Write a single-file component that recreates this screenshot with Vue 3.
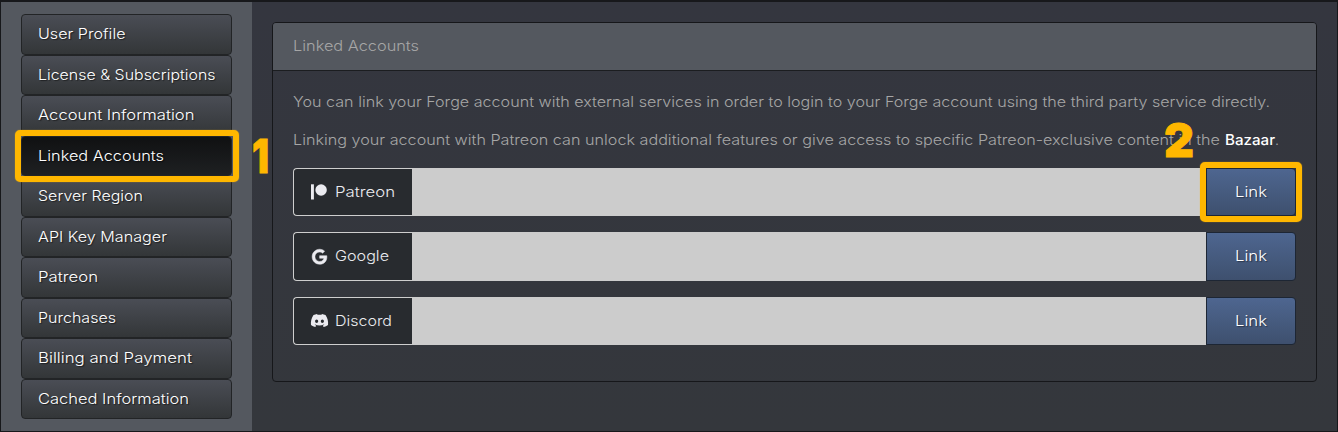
<script setup>
import { h } from 'vue'

// Single line of text set to an exact measure
const Line = (props) =>
  h('svg', { class: 'line', width: props.w, height: 20 }, [
    h('text', { x: 0, y: 15, textLength: props.w, lengthAdjust: 'spacingAndGlyphs' }, props.t),
  ])
Line.props = ['t', 'w']

const menu = [
  { t: 'User Profile', w: 87.5 },
  { t: 'License & Subscriptions', w: 177.5 },
  { t: 'Account Information', w: 156.5 },
  { t: 'Linked Accounts', w: 126, active: true },
  { t: 'Server Region', w: 105 },
  { t: 'API Key Manager', w: 129 },
  { t: 'Patreon', w: 60 },
  { t: 'Purchases', w: 78 },
  { t: 'Billing and Payment', w: 154 },
  { t: 'Cached Information', w: 151 },
]
const services = [
  { t: 'Patreon', w: 60, linked: true },
  { t: 'Google', w: 54 },
  { t: 'Discord', w: 57 },
]
</script>

<template>
  <div class="page">
    <nav class="sidebar">
      <a v-for="m in menu" :key="m.t" class="item" :class="{ active: m.active }">
        <Line :t="m.t" :w="m.w" />
        <i v-if="m.active" class="ring"></i>
      </a>
    </nav>
    <main class="main">
      <section class="card">
        <header class="head"><Line t="Linked Accounts" :w="126" /></header>
        <div class="body">
          <p><Line t="You can link your Forge account with external services in order to login to your Forge account using the third party service directly." :w="977" /></p>
          <p class="second">
            <Line t="Linking your account with Patreon can unlock additional features or give access to specific Patreon-exclusive content in the" :w="927" />
            <a class="bazaar"><Line t="Bazaar" :w="50" /></a><Line t="." :w="4" />
          </p>
          <div v-for="s in services" :key="s.t" class="row">
            <div class="label">
              <span class="icon">
                <svg v-if="s.t === 'Patreon'" width="16" height="16" viewBox="0 0 16 16"><path d="M0 .3h2.9v15.2H0z" /><circle cx="10.1" cy="6" r="5.7" /></svg>
                <svg v-else-if="s.t === 'Google'" class="bold" width="15" height="15.5" viewBox="0 0 488 512"><path d="M488 261.8C488 403.3 391.1 504 248 504 110.8 504 0 393.2 0 256S110.8 8 248 8c66.8 0 123 24.5 166.3 64.9l-67.5 64.9C258.5 52.6 94.3 116.6 94.3 256c0 86.5 69.1 156.6 153.7 156.6 98.2 0 135-70.4 140.8-106.9H248v-85.3h236.1c2.3 12.7 3.9 24.9 3.9 41.4z" /></svg>
                <svg v-else width="19" height="15" viewBox="0 0 640 512"><path d="M524.5 69.8a1.5 1.5 0 0 0-.8-.7A485 485 0 0 0 404.100 32a1.800 1.800 0 0 0-1.900.9 337.500 337.500 0 0 0-14.900 30.600 447.800 447.800 0 0 0-134.400 0 309.500 309.500 0 0 0-15.100-30.600 1.900 1.900 0 0 0-1.900-.9A483.700 483.700 0 0 0 116.100 69.100a1.700 1.700 0 0 0-.8.7C39.100 183.700 18.200 294.700 28.400 404.400a2 2 0 0 0 .8 1.400A487.700 487.700 0 0 0 176 479.900a1.900 1.900 0 0 0 2.100-.7A348.200 348.200 0 0 0 208.100 430.400a1.900 1.900 0 0 0-1-2.600 321.200 321.200 0 0 1-45.900-21.900 1.900 1.900 0 0 1-.2-3.100c3.100-2.300 6.200-4.700 9.100-7.100a1.800 1.800 0 0 1 1.900-.3c96.200 43.900 200.400 43.900 295.500 0a1.800 1.800 0 0 1 1.900.2c2.900 2.400 6 4.900 9.100 7.200a1.900 1.900 0 0 1-.2 3.100 301.400 301.400 0 0 1-45.900 21.800 1.900 1.900 0 0 0-1 2.600 391.100 391.100 0 0 0 30 48.800 1.900 1.900 0 0 0 2.100.7A486 486 0 0 0 610.700 405.700a1.900 1.900 0 0 0 .8-1.400C623.700 277.600 590.900 167.500 524.500 69.800zM222.500 337.600c-29 0-52.800-26.600-52.800-59.200s23.400-59.300 52.800-59.300c29.700 0 53.300 26.800 52.800 59.200 0 32.700-23.400 59.300-52.800 59.300zm195.400 0c-29 0-52.800-26.600-52.800-59.200s23.300-59.300 52.800-59.300c29.700 0 53.300 26.800 52.800 59.200 0 32.700-23.200 59.300-52.800 59.300z" /></svg>
              </span>
              <Line :t="s.t" :w="s.w" />
            </div>
            <div class="field"></div>
            <button class="btn"><Line t="Link" :w="32" /><i v-if="s.linked" class="ring"></i></button>
          </div>
        </div>
      </section>
    </main>
    <svg class="num one" width="30" height="70"><text x="0" y="50" textLength="17" lengthAdjust="spacingAndGlyphs">1</text></svg>
    <svg class="num two" width="40" height="70"><text x="0" y="50" textLength="30" lengthAdjust="spacingAndGlyphs">2</text></svg>
  </div>
</template>

<style scoped>
.page {
  position: relative;
  box-sizing: border-box;
  width: 1338px;
  height: 432px;
  display: flex;
  overflow: hidden;
  border: 1px solid #17181b;
  border-top-width: 2px;
  background: linear-gradient(#34363f, #34373c);
  font-family: Inter, "Liberation Sans", sans-serif;
  font-size: 14.5px;
  font-weight: 360;
}
.page :deep(.line) { display: block; flex: none; overflow: visible; fill: currentColor; }
.sidebar {
  box-sizing: border-box;
  width: 251px;
  flex: none;
  padding: 12px 20px;
  background: #54585f;
}
.item {
  position: relative;
  box-sizing: border-box;
  display: flex;
  align-items: center;
  height: 40.5px;
  padding: 0 0 0 16px;
  border: 1px solid #222426;
  border-radius: 4px;
  background: linear-gradient(#4a4d55, #333638);
  color: #fff;
  text-shadow: 1px 1px 1px rgba(0, 0, 0, .5);
}
.item.active { background: linear-gradient(#101112, #1e2022); }
.ring {
  position: absolute;
  border: 6px solid #ffb700;
  border-radius: 5px;
  box-shadow: 0 0 1px #ffb700;
  z-index: 2;
}
.item .ring { inset: -7px -8px -7px -7px; }
.main { flex: 1; padding: 20px 20px 0; }
.card {
  box-sizing: border-box;
  height: 360px;
  border: 1px solid #16171a;
  border-radius: 4px;
  color: #a6a6a6;
}
.head {
  box-sizing: border-box;
  height: 48px;
  padding: 13px 20px 0;
  border-bottom: 1px solid #1b1d20;
  border-radius: 3px 3px 0 0;
  background: #54585f;
}
.body { padding: 21px 20px 0; }
p { display: flex; margin: 0 0 18px; }
p.second { margin-bottom: 17.6px; }
.bazaar { margin-left: 5px; color: #fff; font-weight: 450; }
.row { display: flex; height: 48.5px; margin-bottom: 16px; }
.label {
  box-sizing: border-box;
  display: flex;
  align-items: center;
  width: 119px;
  padding-left: 15.5px;
  border: 1px solid #cecece;
  border-right: 0;
  border-radius: 4px 0 0 4px;
  background: #282b2f;
  color: #ebebf0;
}
.icon { display: flex; justify-content: center; width: 19px; margin-right: 6.5px; fill: #ebebf0; }
.bold { overflow: visible; stroke: #ebebf0; stroke-width: 16px; }
.field { flex: 1; background: #ccc; }
.btn {
  position: relative;
  box-sizing: border-box;
  display: flex;
  align-items: center;
  justify-content: center;
  width: 90px;
  padding: 0;
  border: 1px solid #1d2634;
  border-radius: 0 4px 4px 0;
  background: linear-gradient(#4e6690, #3e506e);
  color: #fff;
  font: inherit;
  text-shadow: 1px 1px 1px rgba(0, 0, 0, .4);
}
.btn .ring { inset: -7px; }
.num { position: absolute; overflow: visible; fill: #ffb700; stroke: #ffb700; stroke-width: .8px; font-size: 46.5px; font-weight: 900; z-index: 3; }
.one { left: 251px; top: 121px; }
.two { left: 1163px; top: 105px; }
</style>
